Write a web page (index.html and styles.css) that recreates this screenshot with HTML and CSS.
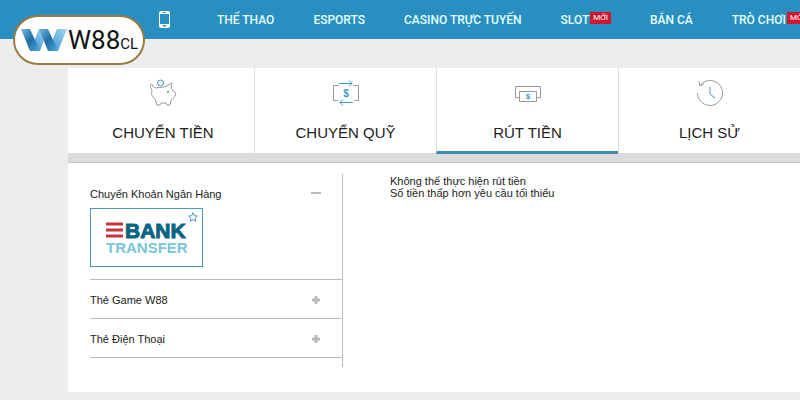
FILE: index.html
```html
<!DOCTYPE html>
<html lang="vi">
<head>
<meta charset="utf-8">
<meta name="viewport" content="width=device-width, initial-scale=1">
<title>W88CL</title>
<link rel="stylesheet" href="styles.css">
</head>
<body>
<header class="topbar">
  <a class="brand" href="#">
    <svg class="brand-mark" viewBox="0 0 46 24" aria-hidden="true">
      <defs>
        <linearGradient id="ga" x1="0" y1="0" x2="1" y2="1"><stop offset="0" stop-color="#7ab8dd"/><stop offset=".5" stop-color="#1c6ea6"/><stop offset="1" stop-color="#4fa9da"/></linearGradient>
        <linearGradient id="gb" x1="0" y1="1" x2="1" y2="0"><stop offset="0" stop-color="#2f8fcb"/><stop offset="1" stop-color="#a8d8f3"/></linearGradient>
      </defs>
      <path fill="url(#gb)" d="M9 23 18 1H27L19 23Z"/>
      <path fill="url(#gb)" d="M27 23 36 1H46L37 23Z"/>
      <path fill="url(#ga)" d="M0 1H9L19 23H9Z"/>
      <path fill="url(#ga)" d="M18 1H27L37 23H27Z"/>
    </svg>
    <span class="brand-name">W88<small>CL</small></span>
  </a>
  <nav class="menu">
    <a class="mobile" href="#" aria-label="Mobile">
      <svg viewBox="0 0 11 17"><path fill="#fff" fill-rule="evenodd" d="M2 0H9Q11 0 11 2V15Q11 17 9 17H2Q0 17 0 15V2Q0 0 2 0ZM1 3V13H10V3ZM4 14V15.500H7V14ZM4 1V2H7V1Z"/></svg>
    </a>
    <a href="#">THỂ THAO</a>
    <a href="#">ESPORTS</a>
    <a href="#">CASINO TRỰC TUYẾN</a>
    <a href="#">SLOT<span class="badge">MỚI</span></a>
    <a href="#">BẮN CÁ</a>
    <a href="#">TRÒ CHƠI<span class="badge">MỚI</span></a>
  </nav>
</header>
<main class="card">
  <nav class="tabs">
    <a class="tab" href="#">
      <svg class="icon" viewBox="0 0 28 28"><path d="M7 9C2 8 4 4 2.500 5S1 9 3 11C2 15 3 18 6 20L8 26H11L12 24H17L18 26H21L22 21C24 20 25 18 26 17L27 14 24 12C23 10 22 9 22 9L23 4 18 7C14 9 10 8 7 9"/><circle class="blue" cx="11.500" cy="4" r="3"/><circle class="dot" cx="19" cy="13" r="1"/></svg>
      <span>CHUYỂN TIỀN</span>
    </a>
    <a class="tab" href="#">
      <svg class="icon" viewBox="0 0 28 28"><path d="M7 6.500H1.500V21.500H6M21 6.500H26.500V21.500H22"/><path class="blue" d="M7 4.500H20M17 1.500 20 4.500 17 7.500M21 23.500H8M11 20.500 8 23.500 11 26.500"/><text x="14" y="18">$</text></svg>
      <span>CHUYỂN QUỸ</span>
    </a>
    <a class="tab active" href="#" aria-current="page">
      <svg class="icon" viewBox="0 0 28 28"><path d="M5 18.500H1.500V7.500H26.500V18.500H23M5.500 12.500H22.500V22.500H5.500Z"/><text class="small" x="14" y="20">$</text></svg>
      <span>RÚT TIỀN</span>
    </a>
    <a class="tab" href="#">
      <svg class="icon" viewBox="0 0 28 28"><path d="M1.500 14A12.500 12.500 0 1 0 4 6.500M3 2 4 7 8 5"/><path class="blue" d="M14 8V15L19 19"/></svg>
      <span>LỊCH SỬ</span>
    </a>
  </nav>
  <div class="content">
    <section class="methods">
      <div class="method">
        <button class="method-head" type="button" aria-expanded="true">Chuyển Khoản Ngân Hàng
          <svg viewBox="0 0 10 10"><path d="M0 4H10" stroke-width="2"/></svg>
        </button>
        <a class="bank" href="#">
          <svg class="star" viewBox="0 0 10 10"><path d="M5 .7 6.300 3.700 9.500 4 7.100 6.100 7.900 9.300 5 7.600 2.100 9.300 2.900 6.100.5 4 3.700 3.700Z"/></svg>
          <svg class="bars" viewBox="0 0 17 16"><path d="M0 2H17M0 8H17M0 14H17"/></svg>
          <strong>BANK</strong>
          <span>TRANSFER</span>
        </a>
      </div>
      <div class="method">
        <button class="method-head" type="button" aria-expanded="false">Thẻ Game W88
          <svg viewBox="0 0 10 10"><path d="M1 5H9M5 1V9" stroke-width="3"/></svg>
        </button>
      </div>
      <div class="method">
        <button class="method-head" type="button" aria-expanded="false">Thẻ Điện Thoại
          <svg viewBox="0 0 10 10"><path d="M1 5H9M5 1V9" stroke-width="3"/></svg>
        </button>
      </div>
    </section>
    <p class="message">Không thể thực hiện rút tiền<br>Số tiền thấp hơn yêu cầu tối thiểu</p>
  </div>
</main>
</body>
</html>
```
FILE: styles.css
```css
* { box-sizing: border-box; }
body {
  margin: 0;
  background: #ededed;
  color: #222;
  font: 11px/12px "Liberation Sans", Arial, sans-serif;
  overflow-x: hidden;
}
a { color: inherit; text-decoration: none; }
svg { display: block; }

.topbar {
  position: relative;
  height: 39px;
  background: #298fc0;
}
.brand {
  position: absolute;
  z-index: 1;
  left: 13px;
  top: 15px;
  width: 132px;
  height: 50px;
  display: flex;
  align-items: center;
  padding-left: 6px;
  gap: 1px;
  background: #fff;
  border: 2px solid #967c42;
  border-radius: 25px;
}
.brand-mark { width: 46px; height: 24px; }
.brand-name { padding-top: 4px; font: 26px/26px Roboto, sans-serif; color: #111; }
.brand-name small { font-size: 15px; }

.menu {
  display: flex;
  align-items: center;
  height: 100%;
  padding-left: 159px;
  gap: 39px;
  overflow: hidden;
  color: #e4ffff;
  font: 500 12px/16px Roboto, sans-serif;
  white-space: nowrap;
}
.menu a { display: flex; flex: none; }
.mobile { margin-right: 8px; }
.mobile svg { width: 11px; height: 17px; }
.badge {
  align-self: flex-start;
  margin-left: 1px;
  padding: 0 3px;
  background: #cf1730;
  color: #fff;
  font-size: 8px;
  font-weight: 400;
  line-height: 12px;
}

.card {
  margin: 29px 0 8px 68px;
  padding-bottom: 25px;
  background: #fff;
}
.tabs {
  display: grid;
  grid-template-columns: repeat(4, 1fr);
  padding-left: 4px;
  border-bottom: 9px solid #dcdcdc;
}
.tab {
  display: flex;
  flex-direction: column;
  align-items: center;
  gap: 16px;
  height: 85px;
  padding-top: 11px;
  font-size: 15px;
  line-height: 20px;
}
.tab + .tab { border-left: 1px solid #ddd; }
.tab.active {
  height: 86px;
  margin-bottom: -1px;
  border-bottom: 3px solid #3c8cab;
}
.icon {
  width: 28px;
  height: 28px;
  fill: none;
  stroke: #999;
}
.icon .blue { stroke: #3e98be; }
.icon .dot { fill: #3e98be; stroke: none; }
.icon text {
  fill: #3e98be;
  stroke: none;
  font-size: 10px;
  font-weight: bold;
  text-anchor: middle;
}
.icon text.small { font-size: 8px; }

.content {
  display: flex;
  gap: 47px;
  padding: 11px 22px 0;
  border-top: 1px solid #c8c8c8;
}
.methods {
  width: 253px;
  padding-bottom: 9px;
  border-right: 1px solid #bbb;
}
.method { border-bottom: 1px solid #bbb; }
.method-head {
  display: flex;
  align-items: center;
  justify-content: space-between;
  width: 100%;
  height: 38px;
  padding: 1px 21px 0 0;
  border: 0;
  background: none;
  color: inherit;
  font: inherit;
  text-align: left;
}
.method-head svg { width: 10px; height: 10px; stroke: #bbb; }
.bank {
  position: relative;
  display: grid;
  grid-template-columns: 17px 62px;
  column-gap: 2px;
  align-content: start;
  justify-content: center;
  width: 113px;
  height: 59px;
  margin: -4px 0 12px;
  padding-top: 12px;
  border: 1px solid #4e98b9;
}
.bank strong {
  color: #0a6582;
  font-size: 21px;
  line-height: 19px;
  -webkit-text-stroke: 1px #0a6582;
}
.bank span {
  grid-column: 1 / -1;
  color: #78c6dc;
  font-size: 15px;
  font-weight: bold;
  line-height: 16px;
}
.bars { width: 17px; height: 16px; margin-top: 1px; stroke: #c7343c; stroke-width: 3; }
.star {
  position: absolute;
  right: 4px;
  top: 3px;
  width: 10px;
  height: 10px;
  fill: none;
  stroke: #4e98b9;
}
.message { margin: 1px 0 0; }
```
